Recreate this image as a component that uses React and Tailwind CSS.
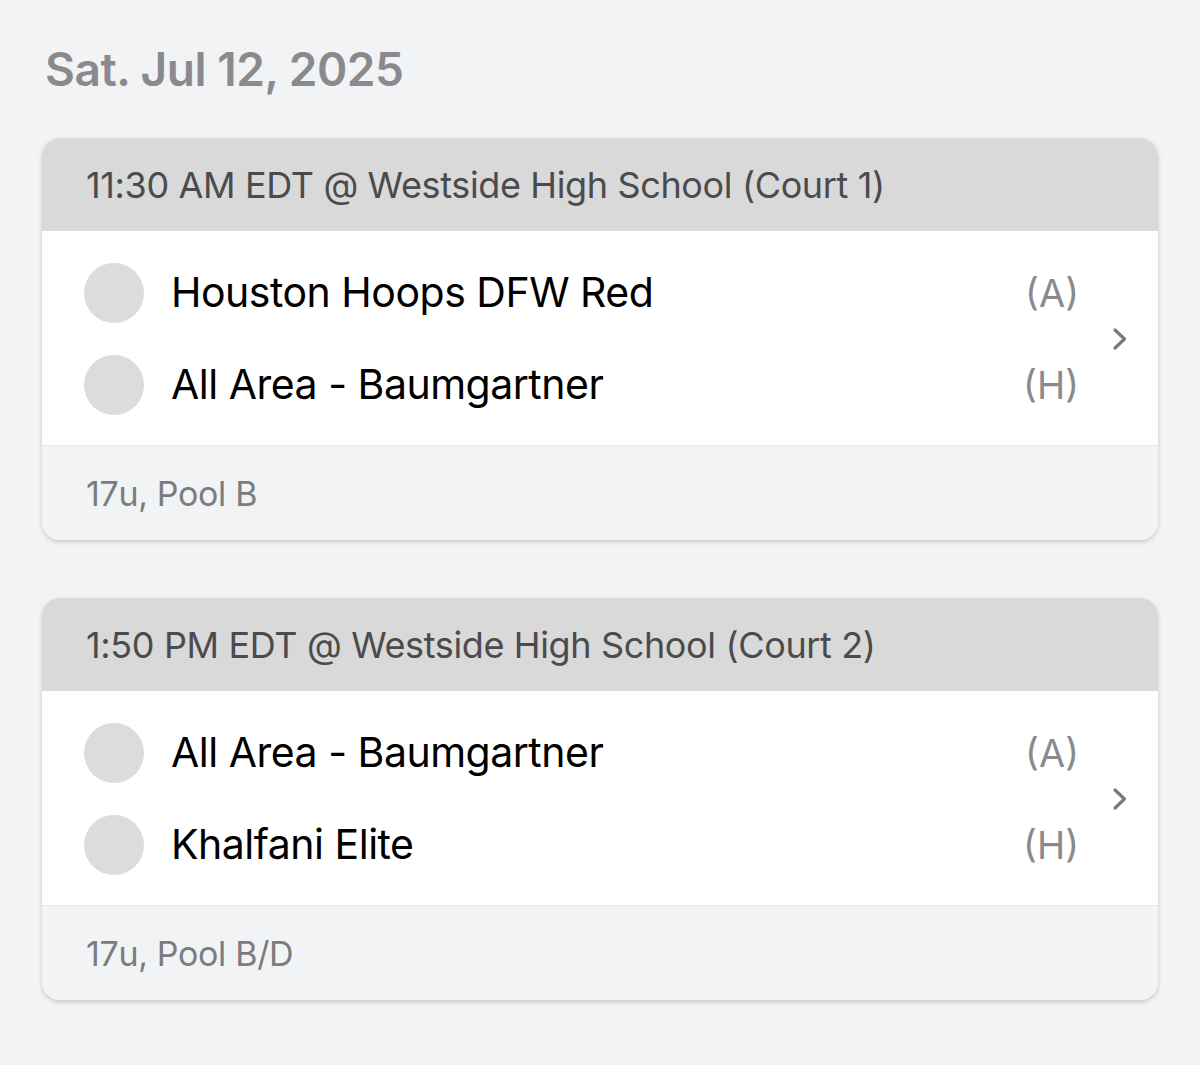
import React from 'react';

const games = [
  {
    header: '11:30 AM EDT @ Westside High School (Court 1)',
    teams: [
      { name: 'Houston Hoops DFW Red', side: '(A)' },
      { name: 'All Area - Baumgartner', side: '(H)' },
    ],
    pool: '17u, Pool B',
  },
  {
    header: '1:50 PM EDT @ Westside High School (Court 2)',
    teams: [
      { name: 'All Area - Baumgartner', side: '(A)' },
      { name: 'Khalfani Elite', side: '(H)' },
    ],
    pool: '17u, Pool B/D',
  },
];

function Chevron() {
  return (
    <svg width="16" height="24" viewBox="0 0 16 24" fill="none">
      <path d="M3 3l9.5 9-9.5 9" stroke="#7a7a7e" strokeWidth="3.2" strokeLinecap="round" strokeLinejoin="round" />
    </svg>
  );
}

function GameCard({ game }) {
  return (
    <div className="rounded-[18px] overflow-hidden bg-white shadow-[0_2px_4px_rgba(0,0,0,0.18)]">
      <div className="bg-[#d9d9d9] h-[93px] flex items-center px-[44px] text-[36px] text-[#4b4b4d] tracking-[-0.01em]">
        {game.header}
      </div>
      <div className="bg-white flex items-center pt-[32px] pb-[30px] pr-[30px]">
        <div className="flex-1 flex flex-col gap-[32px] pl-[42px] pr-[33px]">
          {game.teams.map((t) => (
            <div key={t.name} className="flex items-center h-[60px]">
              <div className="w-[60px] h-[60px] rounded-full bg-[#dcdcdc] shrink-0" />
              <div className="ml-[27px] flex-1 text-[41px] text-black tracking-[-0.012em]">{t.name}</div>
              <div className="text-[38px] text-[#8a8a8e]">{t.side}</div>
            </div>
          ))}
        </div>
        <Chevron />
      </div>
      <div className="bg-[#f2f3f5] border-t border-[#e6e7ea] h-[95px] flex items-center px-[44px] text-[34px] text-[#7c7c80] tracking-[-0.01em]">
        {game.pool}
      </div>
    </div>
  );
}

export default function App() {
  return (
    <div className="min-h-[1065px] bg-[#f2f3f5] px-[42px] pt-[40px] pb-10" style={{ fontFamily: 'Inter, "Noto Sans", sans-serif' }}>
      <h1 className="text-[46px] font-semibold text-[#8a8a8e] ml-[3px] leading-none h-[58px] flex items-center tracking-[-0.01em]">
        Sat. Jul 12, 2025
      </h1>
      <div className="mt-[40px] flex flex-col gap-[58px]">
        {games.map((g) => (
          <GameCard key={g.header} game={g} />
        ))}
      </div>
    </div>
  );
}
